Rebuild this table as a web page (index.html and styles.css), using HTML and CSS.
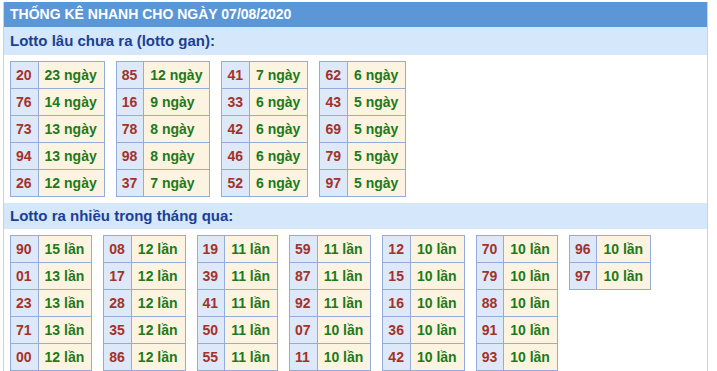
FILE: index.html
```html
<!DOCTYPE html>
<html lang="vi">
<head>
<meta charset="utf-8">
<title>Thống kê nhanh</title>
<link rel="stylesheet" href="styles.css">
</head>
<body>
<div class="box">
  <div class="head">THỐNG KÊ NHANH CHO NGÀY 07/08/2020</div>
  <div class="sub first">Lotto lâu chưa ra (lotto gan):</div>
  <div class="group">
    <table class="t"><tr><td class="n">20</td><td class="v">23 ngày</td></tr><tr><td class="n">76</td><td class="v">14 ngày</td></tr><tr><td class="n">73</td><td class="v">13 ngày</td></tr><tr><td class="n">94</td><td class="v">13 ngày</td></tr><tr><td class="n">26</td><td class="v">12 ngày</td></tr></table>
    <table class="t"><tr><td class="n">85</td><td class="v">12 ngày</td></tr><tr><td class="n">16</td><td class="v">9 ngày</td></tr><tr><td class="n">78</td><td class="v">8 ngày</td></tr><tr><td class="n">98</td><td class="v">8 ngày</td></tr><tr><td class="n">37</td><td class="v">7 ngày</td></tr></table>
    <table class="t"><tr><td class="n">41</td><td class="v">7 ngày</td></tr><tr><td class="n">33</td><td class="v">6 ngày</td></tr><tr><td class="n">42</td><td class="v">6 ngày</td></tr><tr><td class="n">46</td><td class="v">6 ngày</td></tr><tr><td class="n">52</td><td class="v">6 ngày</td></tr></table>
    <table class="t"><tr><td class="n">62</td><td class="v">6 ngày</td></tr><tr><td class="n">43</td><td class="v">5 ngày</td></tr><tr><td class="n">69</td><td class="v">5 ngày</td></tr><tr><td class="n">79</td><td class="v">5 ngày</td></tr><tr><td class="n">97</td><td class="v">5 ngày</td></tr></table>
  </div>
  <div class="sub">Lotto ra nhiều trong tháng qua:</div>
  <div class="group">
    <table class="t"><tr><td class="n">90</td><td class="v">15 lần</td></tr><tr><td class="n">01</td><td class="v">13 lần</td></tr><tr><td class="n">23</td><td class="v">13 lần</td></tr><tr><td class="n">71</td><td class="v">13 lần</td></tr><tr><td class="n">00</td><td class="v">12 lần</td></tr></table>
    <table class="t"><tr><td class="n">08</td><td class="v">12 lần</td></tr><tr><td class="n">17</td><td class="v">12 lần</td></tr><tr><td class="n">28</td><td class="v">12 lần</td></tr><tr><td class="n">35</td><td class="v">12 lần</td></tr><tr><td class="n">86</td><td class="v">12 lần</td></tr></table>
    <table class="t"><tr><td class="n">19</td><td class="v">11 lần</td></tr><tr><td class="n">39</td><td class="v">11 lần</td></tr><tr><td class="n">41</td><td class="v">11 lần</td></tr><tr><td class="n">50</td><td class="v">11 lần</td></tr><tr><td class="n">55</td><td class="v">11 lần</td></tr></table>
    <table class="t"><tr><td class="n">59</td><td class="v">11 lần</td></tr><tr><td class="n">87</td><td class="v">11 lần</td></tr><tr><td class="n">92</td><td class="v">11 lần</td></tr><tr><td class="n">07</td><td class="v">10 lần</td></tr><tr><td class="n">11</td><td class="v">10 lần</td></tr></table>
    <table class="t"><tr><td class="n">12</td><td class="v">10 lần</td></tr><tr><td class="n">15</td><td class="v">10 lần</td></tr><tr><td class="n">16</td><td class="v">10 lần</td></tr><tr><td class="n">36</td><td class="v">10 lần</td></tr><tr><td class="n">42</td><td class="v">10 lần</td></tr></table>
    <table class="t"><tr><td class="n">70</td><td class="v">10 lần</td></tr><tr><td class="n">79</td><td class="v">10 lần</td></tr><tr><td class="n">88</td><td class="v">10 lần</td></tr><tr><td class="n">91</td><td class="v">10 lần</td></tr><tr><td class="n">93</td><td class="v">10 lần</td></tr></table>
    <table class="t"><tr><td class="n">96</td><td class="v">10 lần</td></tr><tr><td class="n">97</td><td class="v">10 lần</td></tr></table>
  </div>
</div>
</body>
</html>
```

FILE: styles.css
```css
html, body {
  margin: 0;
  padding: 0;
  background: #ffffff;
}
body {
  padding: 2px 0 0 3px;
  font-family: "Liberation Sans", Arial, sans-serif;
  font-size: 14px;
  font-weight: bold;
}
.box {
  width: 703px;
  border-left: 1px solid #c9d1e3;
  border-right: 1px solid #c9d1e3;
  padding-bottom: 10px;
}
.head {
  background: #5b96d6;
  color: #ffffff;
  height: 25px;
  line-height: 25px;
  padding-left: 6px;
}
.sub {
  background: #d4e7fb;
  color: #1b3f94;
  font-size: 15px;
  height: 26px;
  line-height: 26px;
  padding-left: 6px;
}
.sub.first {
  height: 28px;
  line-height: 28px;
}
.group {
  display: flex;
  align-items: flex-start;
  gap: 11px;
  padding: 6px 6px;
}
.t {
  border-collapse: collapse;
}
.t td {
  border: 1px solid #94acd9;
  height: 26px;
  white-space: nowrap;
}
.t td.n {
  background: #dde8f8;
  color: #a3322a;
  padding: 0 6px 0 5px;
}
.t td.v {
  background: #fdf3e1;
  color: #1d7a19;
  padding: 0 7px 0 6px;
}
```
